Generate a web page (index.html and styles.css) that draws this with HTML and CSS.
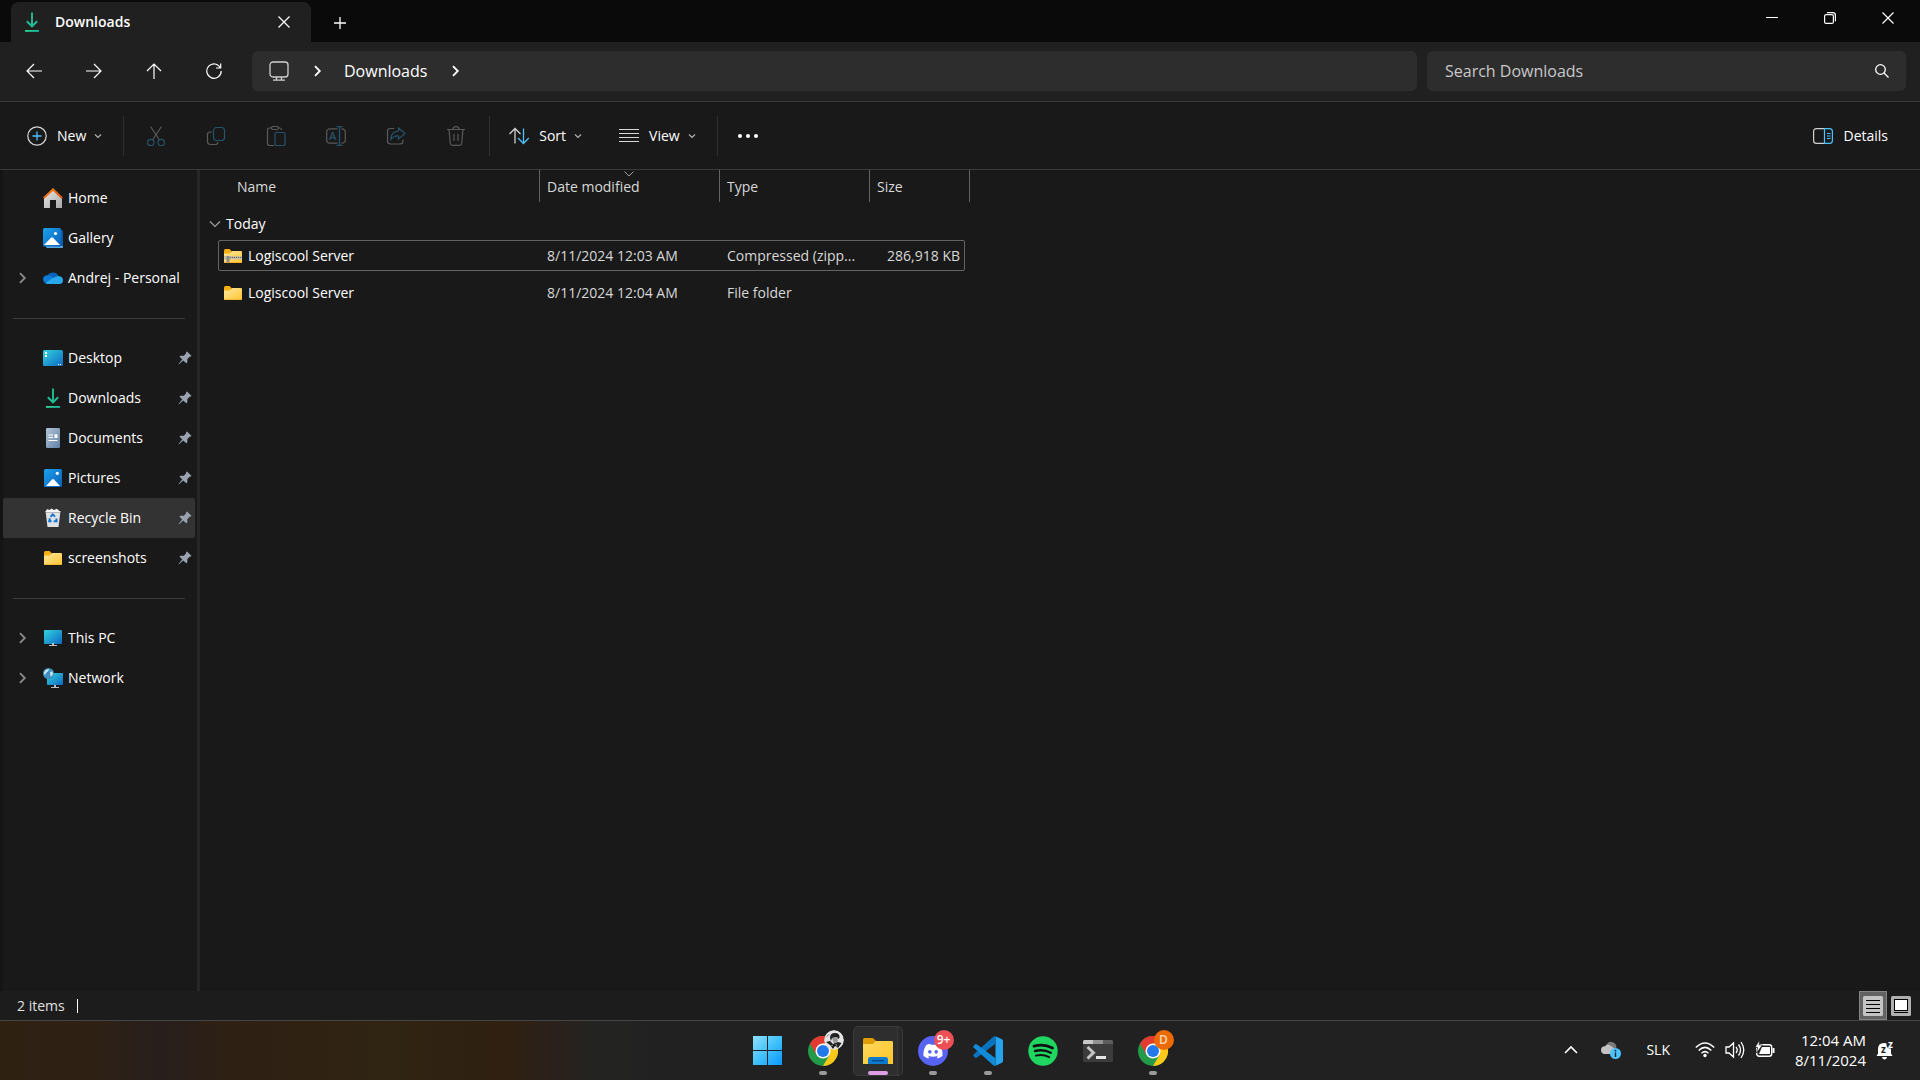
FILE: index.html
```html
<!DOCTYPE html>
<html lang="en">
<head>
    <meta charset="UTF-8">
    <meta name="viewport" content="width=device-width, initial-scale=1.0">
    <title>Downloads</title>
    <link rel="stylesheet" href="styles.css">
</head>
<body>
    <svg class="defs" width="0" height="0" aria-hidden="true">
        <defs>
            <linearGradient id="green" x1="0" y1="0" x2="1" y2="1"><stop offset="0" stop-color="#3ddc84"/><stop offset="1" stop-color="#0fa3a8"/></linearGradient>
            <linearGradient id="blue" x1="0" y1="0" x2="1" y2="1"><stop offset="0" stop-color="#1ba1ec"/><stop offset="1" stop-color="#0a5fb8"/></linearGradient>
            <linearGradient id="teal" x1="0" y1="0" x2="1" y2="1"><stop offset="0" stop-color="#33d3dd"/><stop offset="1" stop-color="#0d69c4"/></linearGradient>
            <linearGradient id="yellow" x1="0" y1="0" x2="1" y2="1"><stop offset="0" stop-color="#ffe8a0"/><stop offset="1" stop-color="#fec52f"/></linearGradient>
            <linearGradient id="gray" x1="0" y1="0" x2="1" y2="1"><stop offset="0" stop-color="#e8e8e8"/><stop offset="1" stop-color="#a9a9a9"/></linearGradient>
            <linearGradient id="orange" x1="0" y1="0" x2="1" y2="1"><stop offset="0" stop-color="#f98e1c"/><stop offset="1" stop-color="#d34a0d"/></linearGradient>
            <linearGradient id="paper" x1="0" y1="0" x2="1" y2="1"><stop offset="0" stop-color="#b4c5d8"/><stop offset="1" stop-color="#5f81a6"/></linearGradient>
            <linearGradient id="win" gradientUnits="userSpaceOnUse" x1="0" y1="0" x2="29" y2="29"><stop offset="0" stop-color="#8fe0ff"/><stop offset="0.5" stop-color="#42c2fb"/><stop offset="1" stop-color="#0a97f8"/></linearGradient>
        </defs>
        <symbol id="i-download" viewBox="0 0 20 20">
            <path d="M10 0.500V14M4.800 9.200L10 14.300L15.200 9.200" fill="none" stroke="#22bd92" stroke-width="1.900"/>
            <path d="M3 18h14v1.900H3z" fill="url(#green)"/>
        </symbol>
        <symbol id="i-chev-down" viewBox="0 0 8 8"><path d="M1 2.500L4 5.500L7 2.500" fill="none" stroke="currentColor" stroke-width="1.200"/></symbol>
        <symbol id="i-chev-right" viewBox="0 0 12 12"><path d="M4 1.200L8.800 6L4 10.800" fill="none" stroke="currentColor" stroke-width="1.800"/></symbol>
        <symbol id="i-close" viewBox="0 0 12 12"><path d="M0.500 0.500L11.500 11.500M11.500 0.500L0.500 11.500" fill="none" stroke="currentColor" stroke-width="1.200"/></symbol>
        <symbol id="i-pin" viewBox="0 0 14 14"><path d="M9 0.600L13.400 4.700L12.500 5.700L11.600 5.700L9.300 8.200L9.300 11.400L8.300 12.300L5.200 9.400L1 13.300L0.500 12.900L4.200 8.500L1.400 5.600L2.500 4.700H5.800L8 2.400V1.500Z" fill="#98a3ad"/></symbol>
        <symbol id="i-picture" viewBox="0 0 20 20">
            <rect x="1" y="1" width="18" height="18" rx="1.500" fill="url(#blue)"/>
            <path d="M3 18L9 11.400Q10 10.400 11 11.400L17 18Z" fill="#fff"/><circle cx="14.300" cy="5.300" r="1.600" fill="#fff"/>
        </symbol>
        <symbol id="i-folder" viewBox="0 0 20 20">
            <path d="M1 4.500Q1 3 2.500 3H6.500L8.500 5V8H1Z" fill="#f9ae11"/>
            <path d="M1 7.500H6.800L9 5H18Q19 5 19 6V16Q19 17 18 17H2Q1 17 1 16Z" fill="url(#yellow)"/>
            <path d="M1.500 16.500H18.500" stroke="#f6b52c"/>
        </symbol>
        <symbol id="i-chrome" viewBox="0 0 30 30">
            <circle cx="15" cy="15" r="15" fill="#229a48"/>
            <path d="M2 7.500A15 15 0 0 1 28 7.500H15L8.500 18.700Z" fill="#e43b30"/>
            <path d="M28 7.500A15 15 0 0 1 15 30L21.500 18.700L15 7.500Z" fill="#fdc818"/>
            <circle cx="15" cy="15" r="7.500" fill="#fff"/><circle cx="15" cy="15" r="6" fill="#2379ec"/>
        </symbol>
    </svg>

    <header class="titlebar">
        <div class="tab">
            <svg class="icon-20"><use href="#i-download"/></svg>
            <span class="tab-title">Downloads</span>
            <button class="tab-close" aria-label="Close tab"><svg class="icon-12"><use href="#i-close"/></svg></button>
        </div>
        <button class="new-tab" aria-label="New tab"><svg class="icon-12" viewBox="0 0 12 12"><path d="M6 0V12M0 6H12" stroke="currentColor" stroke-width="1.300"/></svg></button>
        <div class="window-controls">
            <button aria-label="Minimize"><svg class="icon-12" viewBox="0 0 12 12"><path d="M0 5.500H12" stroke="currentColor"/></svg></button>
            <button aria-label="Restore"><svg class="icon-12" viewBox="0 0 12 12" fill="none" stroke="currentColor" stroke-width="1.200"><rect x="0.600" y="2.600" width="8.800" height="8.800" rx="1.500"/><path d="M3 0.700H8.800Q11.400 0.700 11.400 3.200V9.200"/></svg></button>
            <button aria-label="Close"><svg class="icon-12"><use href="#i-close"/></svg></button>
        </div>
    </header>

    <nav class="navbar">
        <button class="nav-button" aria-label="Back"><svg class="icon-16" viewBox="0 0 16 16" fill="none" stroke="currentColor" stroke-width="1.200"><path d="M16 8H1M8 1L1 8L8 15"/></svg></button>
        <button class="nav-button" aria-label="Forward"><svg class="icon-16" viewBox="0 0 16 16" fill="none" stroke="currentColor" stroke-width="1.200"><path d="M0 8H15M8 1L15 8L8 15"/></svg></button>
        <button class="nav-button" aria-label="Up"><svg class="icon-16" viewBox="0 0 16 16" fill="none" stroke="currentColor" stroke-width="1.200"><path d="M8 16V1M1 8L8 1L15 8"/></svg></button>
        <button class="nav-button" aria-label="Refresh"><svg class="icon-16" viewBox="0 0 16 16" fill="none" stroke="currentColor" stroke-width="1.200"><path d="M14.500 5A7.200 7.200 0 1 0 15.200 8M14.700 0.500V5H10"/></svg></button>
        <div class="address">
            <button class="crumb-pc" aria-label="This PC"><svg class="icon-20" viewBox="0 0 20 20" fill="none" stroke="#d0d0d0" stroke-width="1.300"><rect x="1" y="1" width="18" height="15" rx="3"/><path d="M7.500 16V19M12.500 16V19M4 19.200H16"/></svg></button>
            <svg class="icon-12"><use href="#i-chev-right"/></svg>
            <button class="crumb">Downloads</button>
            <svg class="icon-12"><use href="#i-chev-right"/></svg>
        </div>
        <div class="search">
            <input type="text" aria-label="Search Downloads" placeholder="Search Downloads">
            <button aria-label="Search"><svg class="icon-14" viewBox="0 0 14 14" fill="none" stroke="currentColor" stroke-width="1.300"><circle cx="5.500" cy="5.500" r="4.800"/><path d="M9 9L13.500 13.500"/></svg></button>
        </div>
    </nav>

    <div class="commands">
        <button class="command">
            <svg class="icon-20" viewBox="0 0 20 20" fill="none"><circle cx="10" cy="10" r="9.200" stroke="#d8d8d8" stroke-width="1.200"/><path d="M10 5.500V14.500M5.500 10H14.500" stroke="#4cc2ff" stroke-width="1.300"/></svg>
            New <svg class="icon-8"><use href="#i-chev-down"/></svg>
        </button>
        <span class="divider"></span>
        <div class="file-actions">
            <button aria-label="Cut" disabled><svg class="icon-20" viewBox="0 0 20 20" fill="none" stroke="#5a5a5a" stroke-width="1.200"><path d="M4.500 0.500L13.500 14M15.500 0.500L6.500 14"/><g stroke="#25536e"><circle cx="4.800" cy="16.500" r="3.200"/><circle cx="15.200" cy="16.500" r="3.200"/></g></svg></button>
            <button aria-label="Copy" disabled><svg class="icon-20" viewBox="0 0 20 20" fill="none" stroke="#5a5a5a" stroke-width="1.200"><path d="M6 6H4Q1.500 6 1.500 8.500V15.500Q1.500 18.500 4.500 18.500H9Q12 18.500 12 16"/><rect x="7.500" y="1.500" width="11" height="13" rx="3" stroke="#25536e"/></svg></button>
            <button aria-label="Paste" disabled><svg class="icon-20" viewBox="0 0 20 20" fill="none" stroke="#5a5a5a" stroke-width="1.200"><path d="M5 2H3.500Q1.500 2 1.500 4V17.500Q1.500 19.500 3.500 19.500H8M12.500 2H14Q15.500 2 15.500 4"/><rect x="5.500" y="0.500" width="7" height="3" rx="1.500"/><rect x="9" y="6.500" width="10" height="13" rx="1.500" stroke="#25536e"/></svg></button>
            <button aria-label="Rename" disabled><svg class="icon-20" viewBox="0 0 20 20" fill="none" stroke="#5a5a5a" stroke-width="1.200"><path d="M11.500 2.800H4Q0.700 2.800 0.700 6V14Q0.700 17.200 4 17.200H11.500M15.500 2.800Q19.300 2.800 19.300 6V14Q19.300 17.200 15.500 17.200"/><path d="M10.500 0.600H16.500M13.500 0.600V19.400M10.500 19.400H16.500" stroke="#25536e" stroke-width="1.400"/><text x="3" y="14" class="rename-letter">A</text></svg></button>
            <button aria-label="Share" disabled><svg class="icon-20" viewBox="0 0 20 20" fill="none" stroke="#5a5a5a" stroke-width="1.200"><path d="M8 2.500H4.500Q1.500 2.500 1.500 5.500V15Q1.500 18 4.500 18H14Q17 18 17 15V13.500"/><path d="M12.500 2L19 7.500L12.500 13V10Q8 9.500 4.800 13.500Q5 5.500 12.500 5Z" stroke="#25536e"/></svg></button>
            <button aria-label="Delete" disabled><svg class="icon-20" viewBox="0 0 20 20" fill="none" stroke="#5a5a5a" stroke-width="1.200"><path d="M1 3.500H19M3 3.500L4.300 17.500Q4.500 19.400 6.500 19.400H13.500Q15.500 19.400 15.700 17.500L17 3.500M7 3.500Q7 0.600 10 0.600T13 3.500M8 8V15M12 8V15"/></svg></button>
        </div>
        <span class="divider"></span>
        <button class="command">
            <svg class="icon-20" viewBox="0 0 20 20" fill="none" stroke-width="1.300"><path d="M6 17.500V2.500M0.500 8L6 2.500L11.500 8" stroke="#d0d0d0"/><path d="M14.500 2.500V17.500M9 12L14.500 17.500L19.800 12" stroke="#4cc2ff"/></svg>
            Sort <svg class="icon-8"><use href="#i-chev-down"/></svg>
        </button>
        <button class="command">
            <svg class="icon-20" viewBox="0 0 20 20"><path d="M0 3.500H20M0 7.500H20M0 11.500H20M0 15.500H20" stroke="#d8d8d8"/></svg>
            View <svg class="icon-8"><use href="#i-chev-down"/></svg>
        </button>
        <span class="divider"></span>
        <button class="more" aria-label="More"><svg class="icon-20" viewBox="0 0 20 20" fill="#fff"><circle cx="2" cy="10" r="2"/><circle cx="10" cy="10" r="2"/><circle cx="18" cy="10" r="2"/></svg></button>
        <button class="command details">
            <svg class="icon-20" viewBox="0 0 20 20" fill="none" stroke-width="1.200"><path d="M11.500 2.600H3.500Q0.600 2.600 0.600 5.500V14.500Q0.600 17.400 3.500 17.400H11.500" stroke="#d0d0d0"/><path d="M11.500 2.600H16.500Q19.400 2.600 19.400 5.500V14.500Q19.400 17.400 16.500 17.400H11.500ZM14 7.500H17.500M14 10H17.500M14 12.500H17.500" stroke="#4cc2ff"/></svg>
            Details
        </button>
    </div>

    <div class="explorer">
        <aside class="sidebar">
            <a class="place" href="#"><svg class="icon-20" viewBox="0 0 20 20"><path d="M1 9L10 2L19 9V20H13V12H7V20H1Z" fill="url(#gray)"/><path d="M10 0L20 9.500L18.800 11L10 3L1.200 11L0 9.500Z" fill="url(#orange)"/></svg>Home</a>
            <a class="place" href="#"><svg class="icon-20" viewBox="0 0 20 20"><path d="M3 4H19Q20 4 20 5V19Q20 20 19 20H4Q3 20 3 18Z" fill="#5aa7e0"/><path d="M17 2H19Q20 2 20 4V18H17Z" fill="#0a5cae"/><rect width="18" height="18.500" rx="1.500" fill="url(#blue)"/><path d="M1 17L8 9.800Q9 8.800 10 9.800L17 17Z" fill="#fff"/><circle cx="12.500" cy="5.500" r="1.600" fill="#fff"/></svg>Gallery</a>
            <a class="place" href="#"><svg class="icon-12 expand"><use href="#i-chev-right"/></svg><svg class="icon-20" viewBox="0 0 20 20"><path d="M4 9A6.200 6.200 0 0 1 15.500 8L17 12H6Z" fill="#0a63b8"/><path d="M3 15.500Q0 14 0 11.500Q0 7.500 4.500 7.300Q8 7.300 11 11Z" fill="#0d7bd8"/><path d="M2.500 15.300Q9 9.500 15.500 8Q20 8.500 20 12Q20 16 16.500 16H4.500Q3.300 16 2.500 15.300Z" fill="#28a8ea"/></svg>Andrej - Personal</a>
            <hr>
            <a class="place" href="#"><svg class="icon-20" viewBox="0 0 20 20"><rect y="2" width="20" height="16" rx="1.500" fill="url(#teal)"/><path d="M2 4h2v2H2zM2 7h2v2H2zM15 16h1v1h-1zM17 16h1v1h-1z" fill="#fff"/></svg>Desktop<svg class="pin icon-14"><use href="#i-pin"/></svg></a>
            <a class="place" href="#"><svg class="icon-20"><use href="#i-download"/></svg>Downloads<svg class="pin icon-14"><use href="#i-pin"/></svg></a>
            <a class="place" href="#"><svg class="icon-20" viewBox="0 0 20 20"><rect x="3" width="14" height="20" rx="1.200" fill="url(#paper)"/><path d="M5.500 7H10M5.500 9.500H10M5.500 12.500H14.500" stroke="#fff" stroke-width="1.200"/><path d="M11.500 6.300h3v3.700h-3z" fill="#fff"/></svg>Documents<svg class="pin icon-14"><use href="#i-pin"/></svg></a>
            <a class="place" href="#"><svg class="icon-20"><use href="#i-picture"/></svg>Pictures<svg class="pin icon-14"><use href="#i-pin"/></svg></a>
            <a class="place active" href="#"><svg class="icon-20" viewBox="0 0 20 20"><path d="M2.500 3H17.500L15.500 19H4.500Z" fill="#dfe1e3"/><path d="M2.500 4L4 1L6.500 2L8.500 0.500L11 2L14 0.800L15.500 2.200L17.500 4Z" fill="#f4f4f4"/><path d="M3 4.500H17" stroke="#b5b8bb"/><path d="M7.500 8.800L9.700 6.400L12 8.700M13.300 10.500L13.600 13.300H10.700M8.600 13.300H6.200L6.900 10.200" fill="none" stroke="#0d74cf" stroke-width="1.900"/></svg>Recycle Bin<svg class="pin icon-14"><use href="#i-pin"/></svg></a>
            <a class="place" href="#"><svg class="icon-20"><use href="#i-folder"/></svg>screenshots<svg class="pin icon-14"><use href="#i-pin"/></svg></a>
            <hr>
            <a class="place" href="#"><svg class="icon-12 expand"><use href="#i-chev-right"/></svg><svg class="icon-20" viewBox="0 0 20 20"><rect x="1" y="2" width="18" height="14" rx="0.800" fill="url(#teal)"/><path d="M9 15h2v2h3v1H6v-1h3z" fill="#b8bfc5"/></svg>This PC</a>
            <a class="place" href="#"><svg class="icon-12 expand"><use href="#i-chev-right"/></svg><svg class="icon-20" viewBox="0 0 20 20"><rect x="4" y="5" width="16" height="12" rx="0.800" fill="url(#teal)"/><path d="M11 17h2v2h3v1H8v-1h3z" fill="#b8bfc5"/><circle cx="5.500" cy="5.500" r="5.500" fill="#3e8fbe"/><path d="M2 2.500Q4 0.500 6 1L5 3.500L3 5L2 7.500L0.800 5ZM7 4L9.500 3.500L10 6.500L7.500 9Z" fill="#c4e4f2"/></svg>Network</a>
        </aside>

        <main class="content">
            <table class="files">
                <thead>
                    <tr class="columns">
                        <th>Name</th>
                        <th>Date modified <svg class="sort-mark" viewBox="0 0 10 6"><path d="M0.500 0.500L5 5L9.500 0.500" fill="none" stroke="#a0a0a0"/></svg></th>
                        <th>Type</th>
                        <th>Size</th>
                    </tr>
                </thead>
                <tbody>
                    <tr class="group">
                        <td><button><svg class="icon-12" viewBox="0 0 12 12"><path d="M1 3.500L6 8.500L11 3.500" fill="none" stroke="#a0a0a0" stroke-width="1.200"/></svg>Today</button></td>
                    </tr>
                    <tr class="file selected">
                        <td><svg class="icon-20" viewBox="0 0 20 20"><use href="#i-folder"/><path d="M1 10h18v3.500H1z" fill="#c9bf9f"/><path d="M5 11.500H19" stroke="#5e5a50" stroke-dasharray="1 1"/><path d="M3.500 10h3v6.500h-3z" fill="#8a8a8a"/></svg>Logiscool Server</td>
                        <td>8/11/2024 12:03 AM</td>
                        <td>Compressed (zipp...</td>
                        <td>286,918 KB</td>
                    </tr>
                    <tr class="file">
                        <td><svg class="icon-20"><use href="#i-folder"/></svg>Logiscool Server</td>
                        <td>8/11/2024 12:04 AM</td>
                        <td>File folder</td>
                        <td></td>
                    </tr>
                </tbody>
            </table>
        </main>
    </div>

    <div class="status">
        <span class="count">2 items</span>
        <div class="view-modes">
            <button class="mode on" aria-label="Details view"><svg class="icon-20" viewBox="0 0 20 20"><rect width="20" height="20" rx="1.500" fill="#c4c4c4"/><path d="M3 4.500H17M3 8.500H17M3 12.500H17M3 16.500H17" stroke="#000"/></svg></button>
            <button class="mode" aria-label="Large icons"><svg class="icon-20" viewBox="0 0 20 20"><rect width="20" height="20" rx="1.500" fill="#b0b0b0"/><rect x="3.500" y="3.500" width="13" height="11" fill="#fff" stroke="#000"/><path d="M3 16.500H17" stroke="#000"/></svg></button>
        </div>
    </div>

    <footer class="taskbar">
        <div class="apps">
            <button class="app" aria-label="Start"><svg class="icon-30" viewBox="0 0 30 30" fill="url(#win)"><path d="M0 0H14V14H0ZM15 0H29V14H15ZM0 15H14V29H0ZM15 15H29V29H15Z"/></svg></button>
            <button class="app running" aria-label="Chrome"><svg class="icon-30"><use href="#i-chrome"/></svg>
                <svg class="badge" viewBox="0 0 20 20"><circle cx="10" cy="10" r="10" fill="#e4e4e4"/><path d="M6 8Q6 3 11 3Q16 3 15.500 8L14 9L13 7L8 8L7 11Z" fill="#222"/><path d="M8 8L13 7L14 11L10 14Z" fill="#999"/><path d="M2 12L6 11L9 14L14 12L17.500 13L14 18L11 16L9 19L6 15Z" fill="#222"/><path d="M7 16L9 15M12 14L13 17M2.500 7L5 4" stroke="#888" fill="none"/></svg></button>
            <button class="app running current" aria-label="File Explorer"><svg class="icon-30" viewBox="0 0 30 30"><path d="M0 3.500Q0 2 1.500 2H9Q10 2 11 3L13 5V10H0Z" fill="#e09c05"/><path d="M0 8H10L13 5H28.500Q30 5 30 6.500V28H0Z" fill="url(#yellow)"/><path d="M0 8H10L13 5H28.500Q30 5 30 6.500V28H0Z" fill="#ffc71f" opacity="0.500"/><path d="M5 28V23.500Q5 21 7.500 21H22.500Q25 21 25 23.500V28Z" fill="#0f7bd0"/><path d="M9 24.700H21" stroke="#064c88" stroke-width="1.500"/></svg></button>
            <button class="app running" aria-label="Discord"><svg class="icon-30" viewBox="0 0 30 30"><circle cx="15" cy="15" r="15" fill="#5663f3"/><path transform="translate(5.400 5.500) scale(0.800)" fill="#fff" d="M20.317 4.370a19.791 19.791 0 00-4.885-1.515.074.074 0 00-.079.037c-.211.375-.445.865-.608 1.250-1.845-.276-3.680-.276-5.487 0-.164-.393-.406-.874-.618-1.250a.077.077 0 00-.079-.037 19.736 19.736 0 00-4.885 1.515.070.070 0 00-.032.028C.533 9.046-.319 13.580.099 18.058a.082.082 0 00.031.056c2.053 1.508 4.041 2.423 5.993 3.029a.078.078 0 00.084-.028c.462-.630.873-1.295 1.226-1.994a.076.076 0 00-.042-.106c-.653-.248-1.274-.550-1.872-.892a.077.077 0 01-.008-.128c.126-.094.252-.192.372-.291a.074.074 0 01.078-.011c3.928 1.793 8.180 1.793 12.061 0a.074.074 0 01.079.010c.120.099.246.198.373.292a.077.077 0 01-.007.128 12.299 12.299 0 01-1.873.891.077.077 0 00-.041.107c.360.698.772 1.363 1.225 1.993a.076.076 0 00.084.029c1.961-.607 3.950-1.522 6.002-3.029a.077.077 0 00.031-.055c.500-5.177-.838-9.674-3.549-13.660a.061.061 0 00-.031-.029zM8.020 15.331c-1.183 0-2.157-1.086-2.157-2.419s.956-2.419 2.157-2.419c1.211 0 2.176 1.095 2.157 2.419 0 1.333-.956 2.419-2.157 2.419zm7.975 0c-1.183 0-2.157-1.086-2.157-2.419s.955-2.419 2.157-2.419c1.211 0 2.176 1.095 2.157 2.419 0 1.333-.946 2.419-2.157 2.419z"/></svg>
                <span class="badge badge-red">9+</span></button>
            <button class="app running" aria-label="Visual Studio Code"><svg class="icon-30" viewBox="0 0 30 30"><path d="M22.500 0.200L29 3.200Q30 3.800 30 5V25Q30 26.200 29 26.800L22.500 29.800Z" fill="#24a3ee"/><path d="M22.500 7.800L3.700 21.800Q2.900 22.300 2.200 21.700L0.500 20.100Q-0.200 19.300 0.500 18.500L20.500 0.500Q21.500 0 22.500 0.200Z" fill="#0b72bd"/><path d="M22.500 22.200L3.700 8.200Q2.900 7.700 2.200 8.300L0.500 9.900Q-0.200 10.700 0.500 11.500L20.500 29.500Q21.500 30 22.500 29.800Z" fill="#138ad8"/></svg></button>
            <button class="app" aria-label="Spotify"><svg class="icon-30" viewBox="0 0 30 30" fill="none" stroke="#111" stroke-linecap="round"><circle cx="15" cy="15" r="14.700" fill="#1fd760" stroke="none"/><path d="M6 10.200Q16 7.500 24.500 12" stroke-width="2.800"/><path d="M7 15Q15.500 12.700 22.800 16.800" stroke-width="2.400"/><path d="M7.800 19.600Q15 17.800 21.200 21.200" stroke-width="2"/></svg></button>
            <button class="app" aria-label="Terminal"><svg class="icon-30" viewBox="0 0 30 30"><rect y="4" width="30" height="22" rx="1.500" fill="#3c3c3c"/><path d="M1.500 4H10V8H0V5.500Q0 4 1.500 4Z" fill="#c8c8c8"/><path d="M10 4H20V8H10Z" fill="#929292"/><path d="M20 4H28.500Q30 4 30 5.500V8H20Z" fill="#5f5f5f"/><path d="M4.500 11L10.500 16.700L4.500 22.500" fill="none" stroke="#c4c4c4" stroke-width="3"/><path d="M13 20h10v3H13z" fill="#e6e6e6"/></svg></button>
            <button class="app running" aria-label="Chrome, second profile"><svg class="icon-30"><use href="#i-chrome"/></svg>
                <span class="badge badge-orange">D</span></button>
        </div>
        <div class="tray">
            <button aria-label="Show hidden icons"><svg class="icon-14" viewBox="0 0 14 14"><path d="M1 10L7 4L13 10" fill="none" stroke="currentColor" stroke-width="1.600"/></svg></button>
            <button class="onedrive" aria-label="OneDrive"><svg class="icon-20" viewBox="0 0 20 20"><path d="M5 6Q7 1 11 2Q15 3 15.500 7L12 12H5Z" fill="#7b7b7b"/><path d="M3 14Q0 13 0 10Q0 6.500 4 6.300Q6 3.500 10 6L14 9L12 14Z" fill="#c3c3c3"/><circle cx="14.500" cy="13.500" r="5.500" fill="#4cc2ff"/><path d="M14.500 12.500V17" stroke="#123" stroke-width="1.400"/><circle cx="14.500" cy="10.700" r="0.900" fill="#123"/></svg></button>
            <button class="language">SLK</button>
            <button class="system" aria-label="Network, volume, battery">
                <svg class="icon-20" viewBox="0 0 20 20" fill="none" stroke="currentColor" stroke-width="1.500"><path d="M0.800 7.500Q10-1.500 19.200 7.500M3.700 10.500Q10 4.200 16.300 10.500M6.500 13.300Q10 10 13.500 13.300"/><circle cx="10" cy="15.500" r="1.700" fill="currentColor" stroke="none"/></svg>
                <svg class="icon-20" viewBox="0 0 20 20" fill="none" stroke="currentColor" stroke-width="1.300"><path d="M1 7H4L8.500 3V17L4 13H1ZM11 7Q13.500 10 11 13M13.500 4.500Q17.500 10 13.500 15.500M16 2Q21.500 10 16 18"/></svg>
                <svg class="icon-20" viewBox="0 0 20 20"><rect x="1.700" y="4.700" width="15" height="11.600" rx="2.500" fill="none" stroke="currentColor" stroke-width="1.400"/><path d="M7 7H15V14H4Z" fill="currentColor"/><path d="M17.500 8h2v5h-2z" fill="currentColor"/><path d="M4.500 0L0 7.500H2.500L1.500 13L7.500 5H4.200Z" fill="currentColor" stroke="#212121" stroke-width="0.800"/></svg>
            </button>
            <button class="clock"><span>12:04 AM</span><span>8/11/2024</span></button>
            <button class="bell" aria-label="Notifications"><svg class="icon-20" viewBox="0 0 20 20"><path d="M2 13.500V9Q2 3 8 3Q15 3 15 9V13.500L16.500 16H0.500ZM6 17H11Q10.500 19.500 8.500 19.500T6 17Z" fill="#fff"/><circle cx="14.500" cy="4.500" r="4" fill="#212121"/><text x="5" y="13" class="bell-z">z</text><text x="12" y="8" class="bell-z light">z</text></svg></button>
        </div>
    </footer>
</body>
</html>
```
FILE: styles.css
```css
* {
    box-sizing: border-box;
}
body {
    margin: 0;
    height: 100vh;
    display: flex;
    flex-direction: column;
    overflow: hidden;
    background-color: #191919;
    color: #fff;
    font-family: "Open Sans", "Noto Sans", sans-serif;
    font-size: 14px;
    line-height: 20px;
}
button {
    margin: 0;
    padding: 0;
    border: none;
    background: none;
    color: inherit;
    font: inherit;
    display: flex;
    align-items: center;
    justify-content: center;
}
svg {
    display: block;
    flex: none;
}
.defs {
    position: absolute;
}
.icon-8 { width: 8px; height: 8px; }
.icon-12 { width: 12px; height: 12px; }
.icon-14 { width: 14px; height: 14px; }
.icon-16 { width: 16px; height: 16px; }
.icon-20 { width: 20px; height: 20px; }
.icon-30 { width: 30px; height: 30px; }

/* title bar */
.titlebar {
    display: flex;
    height: 42px;
    flex: none;
    padding: 0 3px 0 11px;
    background-color: #0a0a0a;
}
.tab {
    display: flex;
    align-items: center;
    width: 300px;
    margin-top: 2px;
    padding: 0 11px;
    border-radius: 8px 8px 0 0;
    background-color: #202020;
}
.tab-title {
    margin-left: 13px;
    font-weight: 600;
}
.tab-close {
    width: 32px;
    height: 32px;
    margin-left: auto;
}
.new-tab {
    width: 58px;
    height: 46px;
}
.window-controls {
    display: flex;
    margin-left: auto;
}
.window-controls button {
    width: 58px;
    height: 36px;
}

/* navigation */
.navbar {
    display: flex;
    align-items: center;
    flex: none;
    height: 60px;
    padding: 0 14px 2px 4px;
    border-bottom: 1px solid #3a3a3a;
    background-color: #202020;
}
.nav-button {
    width: 60px;
    height: 40px;
}
.address, .search {
    display: flex;
    align-items: center;
    height: 40px;
    border-radius: 6px;
    background-color: #2d2d2d;
    font-size: 16px;
}
.address {
    flex: 1;
    margin: 0 10px 0 8px;
    padding-left: 17px;
}
.crumb-pc {
    margin-right: 22px;
}
.crumb {
    margin: 0 22px 0 21px;
}
.search {
    width: 479px;
    padding: 0 17px 0 18px;
}
.search input {
    flex: 1;
    padding: 0;
    border: none;
    outline: none;
    background: none;
    color: #fff;
    font: inherit;
}
.search input::placeholder {
    color: #c8c8c8;
    opacity: 1;
}

/* command bar */
.commands {
    display: flex;
    align-items: center;
    flex: none;
    height: 68px;
    padding: 0 32px 0 13px;
    border-bottom: 1px solid #3a3a3a;
}
.command {
    height: 40px;
    padding: 0 14px;
    gap: 10px;
}
.command .icon-8 {
    margin-left: -2px;
    color: #b0b0b0;
}
.command + .command {
    margin-left: 9px;
}
.divider {
    width: 1px;
    height: 40px;
    background-color: #303030;
}
.command + .divider {
    margin-left: 7px;
}
.commands .command:first-child {
    padding-right: 14px;
}
.file-actions {
    display: flex;
    margin: 0 3px 0 2px;
}
.file-actions button {
    width: 60px;
    height: 40px;
}
.divider + .command {
    padding-left: 19px;
}
.rename-letter {
    fill: #25536e;
    stroke: none;
    font-size: 11px;
    font-weight: 600;
}
.more {
    width: 60px;
    height: 40px;
}
.commands .details {
    margin-left: auto;
    padding: 0;
}

/* places */
.explorer {
    display: flex;
    flex: 1;
    min-height: 0;
}
.sidebar {
    flex: none;
    width: 200px;
    padding: 8px 2px 0 0;
    border-left: 3px solid #141414;
    border-right: 3px solid #262626;
}
.place {
    display: flex;
    align-items: center;
    height: 40px;
    padding: 0 3px 0 40px;
    gap: 5px;
    position: relative;
    color: #fff;
    text-decoration: none;
    white-space: nowrap;
}
.place.active {
    border-radius: 2px;
    background-color: #333;
}
.expand {
    position: absolute;
    left: 13px;
    color: #8a8a8a;
}
.pin {
    margin-left: auto;
}
.sidebar hr {
    height: 1px;
    margin: 20px 10px 19px;
    border: none;
    background-color: #3c3c3c;
}

/* file list */
.content {
    flex: 1;
    min-width: 0;
}
.files, .files thead, .files tbody {
    display: block;
}
.files tr {
    display: grid;
    grid-template-columns: 340px 180px 150px 100px;
    justify-content: start;
}
.files th, .files td {
    padding: 0 7px;
    text-align: left;
    font-weight: normal;
    white-space: nowrap;
    color: #d8d8d8;
}
.files th {
    height: 32px;
    padding-top: 7px;
    border-right: 1px solid #636363;
    position: relative;
}
.files th:first-child {
    padding-left: 37px;
}
.sort-mark {
    position: absolute;
    top: 1px;
    left: 84px;
    width: 10px;
    height: 6px;
}
.files .group td {
    padding-left: 9px;
}
.group button {
    height: 38px;
    gap: 5px;
    padding-top: 6px;
    color: #fff;
}
.files .file {
    grid-template-columns: 321px 180px 150px 94px;
    width: 747px;
    height: 31px;
    margin: 0 0 6px 18px;
    border: 1px solid transparent;
    border-radius: 2px;
    line-height: 30px;
}
.files .selected {
    border-color: #636363;
}
.file td:first-child {
    display: flex;
    align-items: center;
    gap: 5px;
    padding-left: 4px;
    color: #fff;
}
.files .file td:last-child {
    padding-right: 4px;
    text-align: right;
}

/* status bar */
.status {
    display: flex;
    align-items: center;
    flex: none;
    height: 29px;
    padding: 0 5px 0 17px;
    background-color: #1c1c1c;
}
.count {
    padding-right: 12px;
    border-right: 1px solid #fff;
    line-height: 14px;
    color: #e0e0e0;
}
.view-modes {
    display: flex;
    margin-left: auto;
}
.mode {
    width: 28px;
    height: 29px;
}
.mode.on {
    border: 1px solid #858585;
    background-color: #636363;
}

/* taskbar */
.taskbar {
    display: grid;
    grid-template-columns: 1fr auto 1fr;
    flex: none;
    height: 60px;
    border-top: 1px solid #454545;
    background: linear-gradient(to right, #2f2112 0, #2e2114 90px, #281f1d 160px, #2e2013 230px, #302413 390px, #2f2011 510px, #29211c 560px, #232422 600px, #212121 660px);
}
.apps {
    display: flex;
    grid-column: 2;
    align-items: center;
    gap: 5px;
}
.app {
    width: 50px;
    height: 50px;
    border-radius: 5px;
    position: relative;
}
.app.current {
    border: 1px solid #3a3a3a;
    background: linear-gradient(to right, #2e2e2e 43px, #3c3c3c 43px, #292929 45px);
}
.app.running::after {
    content: "";
    position: absolute;
    bottom: 1px;
    width: 8px;
    height: 4px;
    border-radius: 2px;
    background-color: #9a9a9a;
}
.app.current::after {
    bottom: 0;
    width: 20px;
    background-color: #dd9ee6;
}
.badge {
    position: absolute;
    top: 4px;
    right: 4px;
    width: 20px;
    height: 20px;
    border-radius: 50%;
    color: #fff;
    font-size: 12px;
    font-weight: 600;
    text-align: center;
}
.badge-red {
    background-color: #ec4f55;
}
.badge-orange {
    background-color: #ec6a06;
    color: #ffd9b8;
}
.tray {
    display: flex;
    grid-column: 3;
    justify-content: flex-end;
    align-items: center;
    padding: 0 24px 2px 0;
}
.onedrive {
    margin: 0 25px 0 23px;
}
.language {
    margin-right: 25px;
}
.system {
    gap: 10px;
    margin-right: 20px;
}
.clock {
    flex-direction: column;
    align-items: flex-end;
    margin-right: 10px;
    font-size: 15px;
}
.bell-z {
    fill: #212121;
    font-size: 10px;
    font-weight: 700;
}
.bell-z.light {
    fill: #fff;
}
```
